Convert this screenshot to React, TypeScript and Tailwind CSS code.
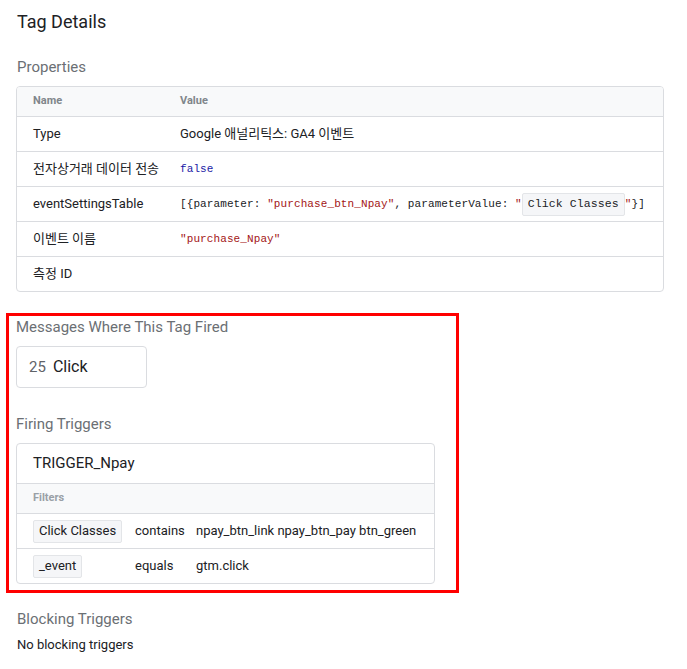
const sans = 'font-["Roboto","Noto_Sans_CJK_KR",sans-serif]';
const mono = 'font-["Liberation_Mono","Noto_Sans_CJK_KR",monospace]';

type Row = { name: string; value: React.ReactNode };

function Chip({ children, className = '' }: { children: React.ReactNode; className?: string }) {
  return (
    <span className={`inline-flex items-center rounded-[2px] border border-[#e3e5e8] bg-[#f5f6f8] ${className}`}>
      {children}
    </span>
  );
}

const rows: Row[] = [
  { name: 'Type', value: <span>Google 애널리틱스: GA4 이벤트</span> },
  { name: '전자상거래 데이터 전송', value: <span className={`${mono} text-[11px] tracking-[0.1px] text-[#1a1aa6]`}>false</span> },
  {
    name: 'eventSettingsTable',
    value: (
      <span className={`${mono} text-[11px] tracking-[0.1px] text-[#202124] flex items-center whitespace-pre`}>
        [{'{'}parameter: <span className="text-[#a31515]">"purchase_btn_Npay"</span>, parameterValue: <span className="text-[#a31515]">"</span>
        <Chip className="h-[23px] px-[5px] text-[11.5px]">Click Classes</Chip>
        <span className="text-[#a31515]">"</span>{'}'}]
      </span>
    ),
  },
  { name: '이벤트 이름', value: <span className={`${mono} text-[11px] tracking-[0.1px] text-[#a31515]`}>"purchase_Npay"</span> },
  { name: '측정 ID', value: null },
];

function Heading({ children, className = '' }: { children: React.ReactNode; className?: string }) {
  return <div className={`text-[15px] leading-[20px] text-[#6b6f74] ${className}`}>{children}</div>;
}

export default function App() {
  return (
    <div className={`${sans} bg-white w-[687px] h-[669px] pl-[16px] pt-[10px] text-[#202124]`}>
      <h1 className="pl-[1px] text-[18px] leading-[24px]">Tag Details</h1>

      <Heading className="mt-[23px] pl-[1px]">Properties</Heading>
      <div className="mt-[9px] w-[648px] rounded-[4px] border border-[#dadce0] overflow-hidden text-[13px]">
        <div className="h-[29px] bg-[#f8f9fa] flex items-center text-[11px] font-bold text-[#80868b]">
          <div className="w-[163px] pl-[16px]">Name</div>
          <div>Value</div>
        </div>
        {rows.map((r) => (
          <div key={r.name} className="h-[35px] border-t border-[#dadce0] flex items-center">
            <div className="w-[163px] pl-[16px] shrink-0">{r.name}</div>
            <div className="flex items-center">{r.value}</div>
          </div>
        ))}
      </div>

      <div className="mt-[21px] -ml-[10px] w-[453px] border-[3px] border-[#ff0000] pl-[7px] pt-[1px] pb-[6px]">
        <Heading>Messages Where This Tag Fired</Heading>
        <div className="mt-[9px] w-[131px] h-[42px] rounded-[4px] border border-[#dadce0] flex items-center pl-[12px]">
          <span className="text-[15px] text-[#5f6368]">25</span>
          <span className="ml-[7px] text-[16px] text-[#202124]">Click</span>
        </div>

        <Heading className="mt-[26px]">Firing Triggers</Heading>
        <div className="mt-[9px] w-[419px] rounded-[4px] border border-[#dadce0] overflow-hidden text-[13px]">
          <div className="h-[39px] flex items-center pl-[16px] text-[15px]">TRIGGER_Npay</div>
          <div className="h-[30px] border-t border-[#dadce0] bg-[#f8f9fa] flex items-center pl-[16px] text-[11px] font-bold text-[#9aa0a6]">
            Filters
          </div>
          {[
            { v: 'Click Classes', op: 'contains', val: 'npay_btn_link npay_btn_pay btn_green' },
            { v: '_event', op: 'equals', val: 'gtm.click' },
          ].map((f) => (
            <div key={f.v} className="h-[35px] border-t border-[#dadce0] grid grid-cols-[102px_61px_1fr] items-center pl-[16px]">
              <div>
                <Chip className="h-[23px] px-[5px] text-[13px]">{f.v}</Chip>
              </div>
              <div>{f.op}</div>
              <div>{f.val}</div>
            </div>
          ))}
        </div>
      </div>

      <Heading className="mt-[16px] pl-[1px]">Blocking Triggers</Heading>
      <div className="mt-[7px] pl-[1px] text-[13px] leading-[18px]">No blocking triggers</div>
    </div>
  );
}
